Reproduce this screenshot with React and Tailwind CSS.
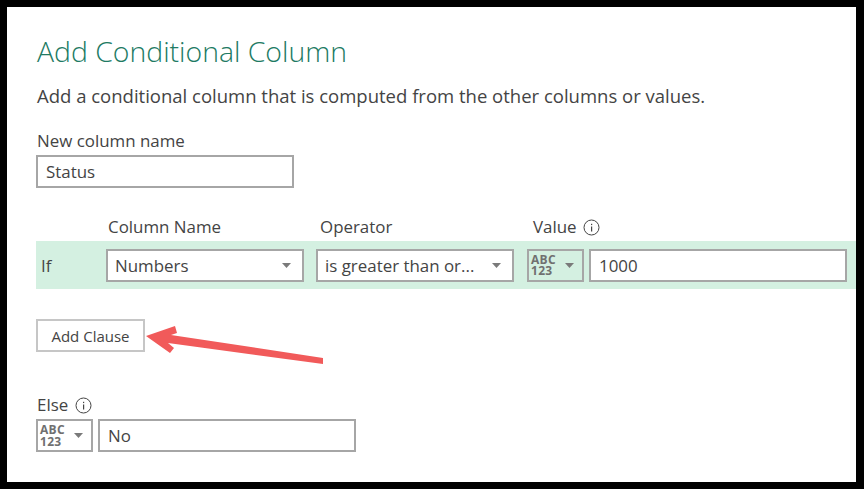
const Caret = () => (
  <svg width="9" height="5" viewBox="0 0 9 5" className="shrink-0">
    <path d="M0 0h9L4.5 5z" fill="#7a7a7a" />
  </svg>
)

const Info = () => (
  <svg width="17" height="17" viewBox="0 0 17 17" className="shrink-0">
    <circle cx="8.5" cy="8.5" r="7.5" fill="none" stroke="#444" strokeWidth="1" />
    <rect x="8" y="7.5" width="1.2" height="5" fill="#444" />
    <rect x="8" y="4.8" width="1.2" height="1.3" fill="#444" />
  </svg>
)

const Select = ({ label, className }) => (
  <div className={`flex h-[33px] items-center justify-between border-2 border-[#a6a6a6] bg-white pl-[7px] pr-[11px] text-[#444] ${className}`}>
    <span className="pt-[1px]">{label}</span>
    <Caret />
  </div>
)

const TypePicker = () => (
  <div className="flex h-[33px] w-[57px] shrink-0 items-center justify-between border-2 border-[#a6a6a6] pl-[2px] pr-[8px]">
    <div className="whitespace-pre-line text-[12px] font-bold leading-[11.5px] tracking-[0.3px] text-[#707070]">
      {'ABC\n123'}
    </div>
    <Caret />
  </div>
)

const TextBox = ({ value, className }) => (
  <div className={`flex h-[33px] items-center border-2 border-[#a6a6a6] bg-white pl-[8px] pt-[1px] text-[#444] ${className}`}>
    {value}
  </div>
)

export default function App() {
  return (
    <div className="relative h-[489px] w-[864px] overflow-hidden bg-black pb-[7px] pl-[7px] pr-[8px] pt-[7px] font-['Open_Sans',sans-serif] text-[16.9px]">
      <div className="h-full bg-white pl-[29px] pt-[26px]">
        <h1 className="ml-[1px] text-[28.4px] font-light leading-[36px] text-[#217a63]">Add Conditional Column</h1>
        <p className="ml-[1px] mt-[15px] text-[18.5px] leading-[24px] text-[#444]">
          Add a conditional column that is computed from the other columns or values.
        </p>

        <p className="ml-[1px] mt-[22px] leading-[22px] text-[#444]">New column name</p>
        <TextBox value="Status" className="mt-[3px] w-[258px]" />

        <div className="mt-[28px] flex h-[22px] items-center leading-[22px] text-[#444]">
          <span className="ml-[72px] w-[212px]">Column Name</span>
          <span className="w-[213px]">Operator</span>
          <span>Value</span>
          <span className="ml-[6px]"><Info /></span>
        </div>

        <div className="mt-[3px] flex h-[48px] items-center bg-[#d4f0e1] text-[#444]">
          <span className="ml-[5px] w-[65px] pt-[1px]">If</span>
          <Select label="Numbers" className="w-[198px]" />
          <Select label="is greater than or..." className="ml-[12px] w-[198px]" />
          <div className="ml-[13px]"><TypePicker /></div>
          <TextBox value="1000" className="ml-[5px] w-[258px]" />
        </div>

        <button type="button" className="mt-[30px] flex h-[33px] w-[109px] items-center justify-center border-2 border-[#c6c6c6] pt-[1px] text-[15px] text-[#444]">
          Add Clause
        </button>

        <div className="mt-[42px] flex h-[22px] items-center leading-[22px] text-[#444]">
          <span className="ml-[1px]">Else</span>
          <span className="ml-[7px]"><Info /></span>
        </div>
        <div className="mt-[3px] flex">
          <TypePicker />
          <TextBox value="No" className="ml-[5px] w-[258px]" />
        </div>
      </div>

      <svg width="864" height="489" viewBox="0 0 864 489" className="pointer-events-none absolute left-0 top-0">
        <path
          d="M146 336 L175 326 L177 333 L171 335 L323 358 L323 364 L168 343 L174 348 L170 353 Z"
          fill="#f15a5a"
        />
      </svg>
    </div>
  )
}
